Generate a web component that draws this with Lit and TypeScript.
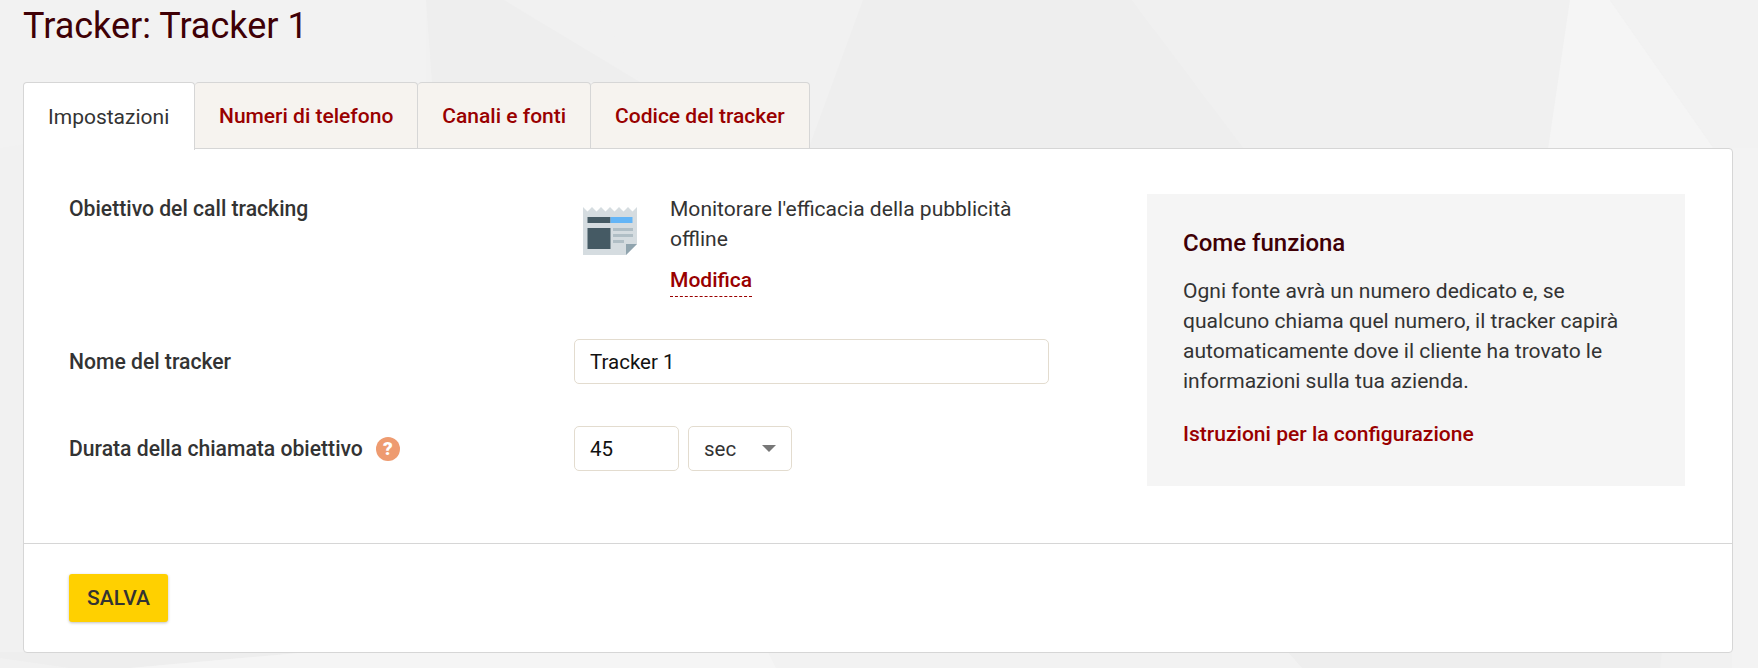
import { LitElement, html, css, svg } from "lit";
import { customElement } from "lit/decorators.js";

const tabs = ["Impostazioni", "Numeri di telefono", "Canali e fonti", "Codice del tracker"];

@customElement("app-root")
class AppRoot extends LitElement {
  static styles = css`
    :host {
      display: block;
      position: relative;
      height: 668px;
      overflow: hidden;
      background: #f1f1f1;
      font-family: Roboto, sans-serif;
      font-size: 21.05px;
      line-height: 30px;
      color: #333;
    }
    .bg {
      position: absolute;
      inset: 0;
      width: 100%;
      height: 100%;
    }
    .page {
      position: relative;
      padding: 0 25px 0 23px;
    }
    h1 {
      margin: 0;
      padding-top: 6px;
      height: 82px;
      box-sizing: border-box;
      font-size: 36px;
      line-height: 40px;
      font-weight: 400;
      color: #3f0006;
    }
    .tabs {
      display: flex;
      height: 67px;
      position: relative;
      z-index: 1;
    }
    .tab {
      box-sizing: border-box;
      height: 67px;
      padding: 0 24px;
      display: flex;
      align-items: center;
      background: #f6f3ef;
      border: 1px solid #d6d6d6;
      border-left: 0;
      border-radius: 4px 4px 0 0;
      color: #990000;
      font-size: 21px;
      font-weight: 500;
    }
    .tab.active {
      width: 172px;
      background: #fff;
      color: #333;
      font-weight: 400;
      border-left: 1px solid #d6d6d6;
      border-bottom: 0;
      height: 68px;
    }
    .card {
      box-sizing: border-box;
      height: 505px;
      margin-top: -1px;
      background: #fff;
      border: 1px solid #d6d6d6;
      border-radius: 0 4px 4px 4px;
      display: flex;
      flex-direction: column;
    }
    .body {
      box-sizing: border-box;
      flex: none;
      height: 395px;
      padding: 45px 47px 0 45px;
      display: flex;
      justify-content: space-between;
      border-bottom: 1px solid #d6d6d6;
    }
    .form {
      width: 980px;
    }
    .row {
      display: grid;
      grid-template-columns: 505px 1fr;
      align-items: center;
    }
    .row.goal {
      align-items: start;
      height: 145px;
    }
    .row.name {
      height: 45px;
      margin-bottom: 42px;
    }
    .row.duration {
      height: 45px;
    }
    .label {
      font-size: 21.15px;
      font-weight: 500;
      display: flex;
      align-items: center;
    }
    .goal-value {
      display: flex;
      width: 475px;
    }
    .goal-value svg {
      flex: none;
      margin: 13px 0 0 9px;
    }
    .goal-text {
      margin-left: 33px;
    }
    .goal-text a {
      display: inline-block;
      margin-top: 11px;
      height: 31px;
      color: #990000;
      font-weight: 500;
      border-bottom: 1px dashed #990000;
    }
    .help {
      flex: none;
      margin-left: 13px;
      width: 24px;
      height: 24px;
      border-radius: 50%;
      background: #ee9b70;
      color: #fff;
      font-size: 19px;
      font-weight: 900;
      line-height: 24px;
      text-align: center;
    }
    .field {
      box-sizing: border-box;
      height: 45px;
      padding: 0 15px;
      background: #fff;
      border: 1px solid #e3dccf;
      border-radius: 5px;
      display: flex;
      align-items: center;
      color: #111;
      font-size: 20.5px;
    }
    .field.wide {
      width: 475px;
    }
    .controls {
      display: flex;
      gap: 9px;
    }
    .field.num {
      width: 105px;
    }
    .field.sel {
      width: 104px;
      justify-content: space-between;
      color: #333;
    }
    .caret {
      width: 0;
      height: 0;
      border-left: 7px solid transparent;
      border-right: 7px solid transparent;
      border-top: 7px solid #777;
    }
    .info {
      box-sizing: border-box;
      width: 538px;
      height: 292px;
      padding: 33px 36px;
      background: #f5f5f5;
    }
    h3 {
      margin: 0 0 17px;
      font-size: 24px;
      line-height: 32px;
      font-weight: 500;
      color: #3f0006;
    }
    .info p {
      margin: 0 0 23px;
    }
    .info a {
      color: #990000;
      font-weight: 500;
    }
    .footer {
      padding: 30px 45px;
    }
    button {
      width: 99px;
      height: 48px;
      padding: 0;
      border: 0;
      border-radius: 3px;
      background: #ffd000;
      box-shadow: 0 1px 3px rgba(0, 0, 0, 0.25);
      font: 500 21px Roboto, sans-serif;
      color: #333;
    }
  `;

  renderBackground() {
    return html`<svg class="bg" viewBox="0 0 1758 668" preserveAspectRatio="none">
      ${svg`<polygon points="0,0 426,0 426,82 0,148" fill="#f2f2f2" />
        <polygon points="426,0 504,0 640,82 432,82" fill="#eeeeee" />
        <polygon points="594,0 863,0 808,150 640,82" fill="#f1f1f1" />
        <polygon points="863,0 1132,0 1245,150 808,150" fill="#eeeeee" />
        <polygon points="1132,0 1570,0 1548,150 1245,150" fill="#f0f0f0" />
        <polygon points="1570,0 1610,0 1715,150 1548,150" fill="#f5f5f5" />
        <polygon points="1610,0 1758,0 1758,150 1715,150" fill="#f2f2f2" />
        <polygon points="0,148 23,148 23,640 0,640" fill="#f1f1f1" />
        <polygon points="1732,148 1758,148 1758,668 1732,668" fill="#f3f3f3" />
        <polygon points="0,652 310,652 130,668 70,668 0,658" fill="#eeeeee" />
        <polygon points="310,652 768,652 776,668 130,668" fill="#f5f5f5" />
        <polygon points="768,652 1288,652 1302,668 776,668" fill="#f2f2f2" />
        <polygon points="1288,652 1662,652 1660,668 1302,668" fill="#eeeeee" />`}
    </svg>`;
  }

  renderIcon() {
    return svg`<svg width="54" height="48" viewBox="0 0 54 48">
      <path d="M0 0l4.500 4.500 4.500-4.500 4.500 4.500 4.500-4.500 4.500 4.500 4.500-4.500 4.500 4.500 4.500-4.500 4.500 4.500 4.500-4.500 4.500 4.500 4.500-4.500v37l-11 11H0z" fill="#d5dce0" />
      <path d="M43 48V37h11z" fill="#90a4ae" />
      <rect x="4.500" y="10" width="23" height="6" fill="#455a64" />
      <rect x="27.500" y="10" width="22" height="6" fill="#64b5f6" />
      <rect x="4.500" y="21" width="23" height="21" fill="#455a64" />
      <rect x="30" y="21" width="20" height="3" fill="#b0bec5" />
      <rect x="30" y="27" width="20" height="3" fill="#b0bec5" />
      <rect x="30" y="33" width="11" height="3" fill="#b0bec5" />
    </svg>`;
  }

  render() {
    return html`
      ${this.renderBackground()}
      <div class="page">
        <h1>Tracker: Tracker 1</h1>
        <div class="tabs">
          ${tabs.map((t, i) => html`<div class="tab ${i === 0 ? "active" : ""}">${t}</div>`)}
        </div>
        <div class="card">
          <div class="body">
            <div class="form">
              <div class="row goal">
                <div class="label">Obiettivo del call tracking</div>
                <div class="goal-value">
                  ${this.renderIcon()}
                  <div class="goal-text">
                    Monitorare l'efficacia della pubblicità offline<br />
                    <a>Modifica</a>
                  </div>
                </div>
              </div>
              <div class="row name">
                <div class="label">Nome del tracker</div>
                <div class="field wide">Tracker 1</div>
              </div>
              <div class="row duration">
                <div class="label">Durata della chiamata obiettivo <span class="help">?</span></div>
                <div class="controls">
                  <div class="field num">45</div>
                  <div class="field sel">sec <span class="caret"></span></div>
                </div>
              </div>
            </div>
            <div class="info">
              <h3>Come funziona</h3>
              <p>Ogni fonte avrà un numero dedicato e, se qualcuno chiama quel numero, il tracker capirà automaticamente dove il cliente ha trovato le informazioni sulla tua azienda.</p>
              <a>Istruzioni per la configurazione</a>
            </div>
          </div>
          <div class="footer"><button>SALVA</button></div>
        </div>
      </div>
    `;
  }
}
